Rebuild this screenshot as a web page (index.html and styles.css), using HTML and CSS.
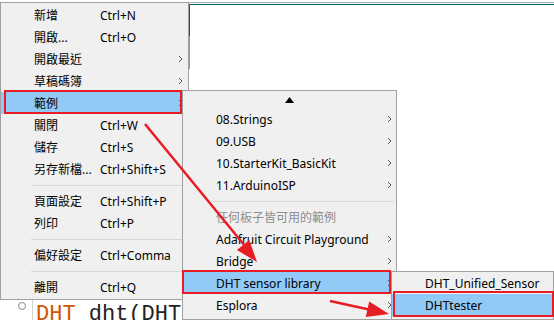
FILE: index.html
```html
<!DOCTYPE html>
<html lang="zh-Hant">
<head>
    <meta charset="UTF-8">
    <title>檔案選單 - 範例</title>
    <link rel="stylesheet" href="styles.css">
</head>
<body>
    <div class="editor">
        <div class="rule gray"></div>
        <div class="rule teal"></div>
        <div class="pane-edge"></div>
        <div class="code-line">
            <div class="gutter"><span class="dot"></span></div>
            <div class="code"><span class="kw">DHT</span> dht(DHTPIN</div>
        </div>
    </div>

    <!-- 檔案選單 -->
    <div class="menu main-menu">
        <div class="item"><span class="label">新增</span><span class="key">Ctrl+N</span></div>
        <div class="item"><span class="label">開啟...</span><span class="key">Ctrl+O</span></div>
        <div class="item"><span class="label">開啟最近</span><span class="key"></span><svg class="chev" viewBox="0 0 5 8"><polyline points="1,1 4,4 1,7"/></svg></div>
        <div class="item"><span class="label">草稿碼簿</span><span class="key"></span><svg class="chev" viewBox="0 0 5 8"><polyline points="1,1 4,4 1,7"/></svg></div>
        <div class="item active"><span class="label">範例</span><span class="key"></span><svg class="chev" viewBox="0 0 5 8"><polyline points="1,1 4,4 1,7"/></svg></div>
        <div class="item"><span class="label">關閉</span><span class="key">Ctrl+W</span></div>
        <div class="item"><span class="label">儲存</span><span class="key">Ctrl+S</span></div>
        <div class="item"><span class="label">另存新檔...</span><span class="key">Ctrl+Shift+S</span></div>
        <div class="sep"></div>
        <div class="item"><span class="label">頁面設定</span><span class="key">Ctrl+Shift+P</span></div>
        <div class="item"><span class="label">列印</span><span class="key">Ctrl+P</span></div>
        <div class="sep"></div>
        <div class="item"><span class="label">偏好設定</span><span class="key">Ctrl+Comma</span></div>
        <div class="sep"></div>
        <div class="item"><span class="label">離開</span><span class="key">Ctrl+Q</span></div>
    </div>

    <!-- 範例 子選單 -->
    <div class="menu sub-menu">
        <div class="scroll-up"><svg viewBox="0 0 9 6"><polygon points="4.5,0 9,6 0,6"/></svg></div>
        <div class="item"><span class="name">08.Strings</span><svg class="chev" viewBox="0 0 5 8"><polyline points="1,1 4,4 1,7"/></svg></div>
        <div class="item"><span class="name">09.USB</span><svg class="chev" viewBox="0 0 5 8"><polyline points="1,1 4,4 1,7"/></svg></div>
        <div class="item"><span class="name">10.StarterKit_BasicKit</span><svg class="chev" viewBox="0 0 5 8"><polyline points="1,1 4,4 1,7"/></svg></div>
        <div class="item"><span class="name">11.ArduinoISP</span><svg class="chev" viewBox="0 0 5 8"><polyline points="1,1 4,4 1,7"/></svg></div>
        <div class="sep"></div>
        <div class="item header"><span class="name">任何板子皆可用的範例</span></div>
        <div class="item"><span class="name">Adafruit Circuit Playground</span><svg class="chev" viewBox="0 0 5 8"><polyline points="1,1 4,4 1,7"/></svg></div>
        <div class="item"><span class="name">Bridge</span><svg class="chev" viewBox="0 0 5 8"><polyline points="1,1 4,4 1,7"/></svg></div>
        <div class="item active"><span class="name">DHT sensor library</span><svg class="chev" viewBox="0 0 5 8"><polyline points="1,1 4,4 1,7"/></svg></div>
        <div class="item"><span class="name">Esplora</span><svg class="chev" viewBox="0 0 5 8"><polyline points="1,1 4,4 1,7"/></svg></div>
    </div>

    <!-- DHT sensor library 子選單 -->
    <div class="menu lib-menu">
        <div class="item"><span class="name">DHT_Unified_Sensor</span></div>
        <div class="item active"><span class="name">DHTtester</span></div>
    </div>

    <!-- 標註 -->
    <div class="mark mark-examples"></div>
    <div class="mark mark-library"></div>
    <div class="mark mark-tester"></div>
    <svg class="arrows" viewBox="0 0 554 320">
        <line x1="145" y1="124" x2="245" y2="246"/>
        <polygon points="257,262 236.9,249.9 249.3,239.9"/>
        <line x1="330" y1="301" x2="369" y2="309.5"/>
        <polygon points="389,314 365.8,317.1 369.2,301.5"/>
    </svg>
</body>
</html>
```

FILE: styles.css
```css
body { margin: 0; width: 554px; height: 320px; overflow: hidden; position: relative; background: #fff; font-family: "Noto Sans", "Noto Sans CJK TC", sans-serif; font-size: 12px; color: #000; }

/* editor behind the menus */
.editor { height: 320px; display: flex; flex-direction: column; }
.rule { height: 1px; margin-left: 189px; }
.rule.gray { margin-top: 2px; background: #a8a8a8; }
.rule.teal { margin-top: 1px; background: #006468; }
.pane-edge { margin-left: 189px; width: 1px; height: 64px; background: linear-gradient(#006468 0 31px, #5fb0b4 31px); }
.code-line { margin-top: auto; display: flex; height: 20px; overflow: hidden; }
.gutter { width: 33px; flex: none; border-right: 1px solid #d4d4d4; display: flex; justify-content: flex-end; padding-right: 6px; box-sizing: border-box; }
.dot { width: 6px; height: 6px; border: 1px solid #8a8a8a; border-radius: 50%; margin-top: 2px; }
.code { font-family: "Liberation Mono", monospace; font-size: 22px; line-height: 22px; padding-left: 3px; padding-top: 4px; white-space: pre; color: #222; }
.kw { color: #d35400; }

/* menus */
.menu { position: absolute; box-sizing: border-box; background: #f0f0f0; border: 1px solid #a0a0a0; }
.main-menu { left: 0; top: 2px; width: 189px; padding: 1px 0; }
.sub-menu { left: 182px; top: 90px; width: 215px; height: 230px; overflow: hidden; }
.lib-menu { left: 391px; top: 271px; width: 163px; height: 49px; overflow: hidden; }

.item { display: flex; align-items: center; height: 22px; flex: none; padding-left: 33px; padding-right: 4px; white-space: nowrap; }
.main-menu .item { padding-right: 5px; }
.item.active { background: #91c9f7; }
.item.header { color: #8d8d8d; }
.label { width: 66px; }
.key { flex: 1; }
.name { flex: 1; }
.chev { width: 5px; height: 8px; fill: none; stroke: #555; stroke-width: 1; }

.sep { height: 10px; display: flex; align-items: center; padding-left: 30px; padding-right: 2px; }
.sep::after { content: ""; flex: 1; height: 1px; background: #d7d7d7; }
.sub-menu .sep { padding-left: 29px; }

.scroll-up { height: 17px; display: flex; align-items: center; justify-content: center; }
.scroll-up svg { width: 9px; height: 6px; fill: #000; }

/* red annotations */
.mark { position: absolute; box-sizing: border-box; border: 2px solid #e81c24; }
.mark-examples { left: 4px; top: 90px; width: 178px; height: 24px; }
.mark-library { left: 182px; top: 270px; width: 209px; height: 24px; }
.mark-tester { left: 393px; top: 291px; width: 161px; height: 26px; }
.arrows { position: absolute; left: 0; top: 0; width: 554px; height: 320px; pointer-events: none; }
.arrows line { stroke: #e81c24; stroke-width: 2.5; }
.arrows polygon { fill: #e81c24; }
```
